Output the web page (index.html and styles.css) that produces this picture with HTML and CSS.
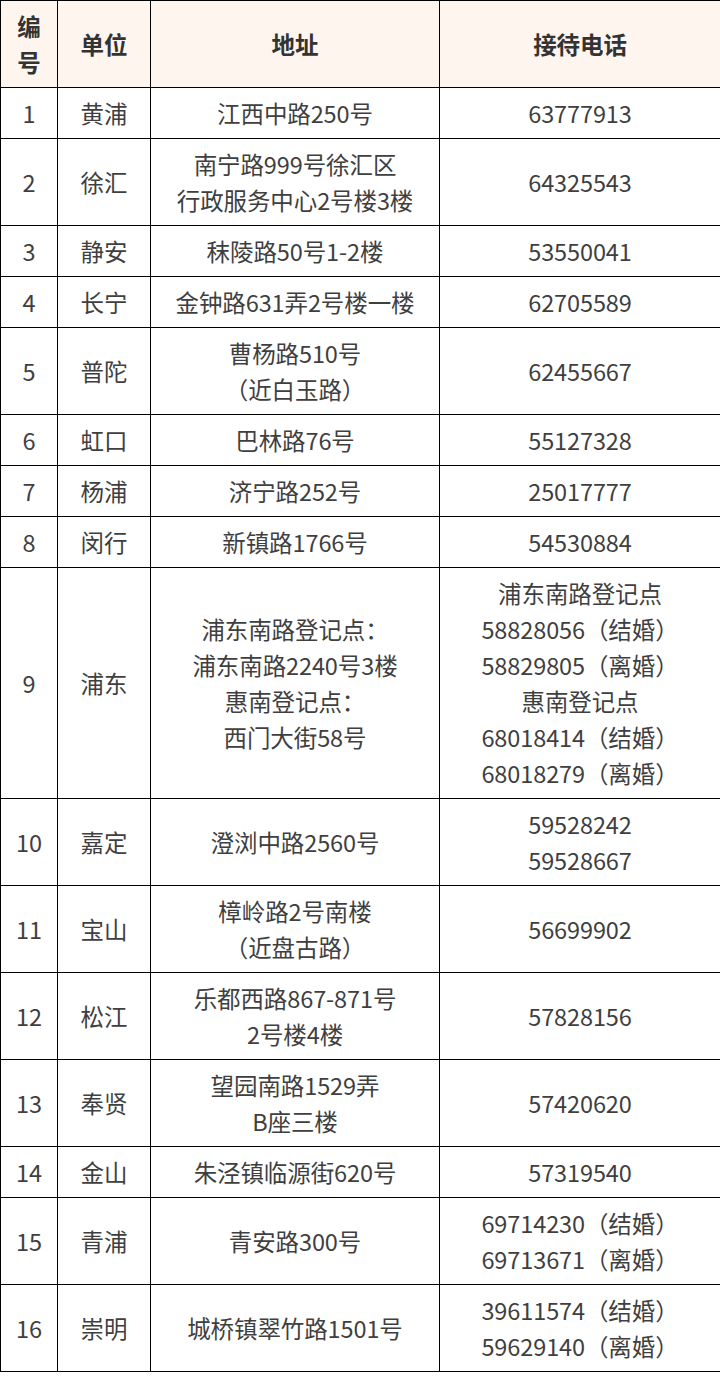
FILE: index.html
```html
<!DOCTYPE html>
<html lang="zh-CN">
<head>
<meta charset="utf-8">
<title>婚姻登记处</title>
<link rel="stylesheet" href="styles.css">
</head>
<body>
<table class="reg">
  <colgroup>
    <col class="c-no">
    <col class="c-unit">
    <col class="c-addr">
    <col class="c-tel">
  </colgroup>
  <thead>
    <tr><th>编<br>号</th><th>单位</th><th>地址</th><th>接待电话</th></tr>
  </thead>
  <tbody>
    <tr><td>1</td><td>黄浦</td><td>江西中路250号</td><td>63777913</td></tr>
    <tr><td>2</td><td>徐汇</td><td>南宁路999号徐汇区<br>行政服务中心2号楼3楼</td><td>64325543</td></tr>
    <tr><td>3</td><td>静安</td><td>秣陵路50号1-2楼</td><td>53550041</td></tr>
    <tr><td>4</td><td>长宁</td><td>金钟路631弄2号楼一楼</td><td>62705589</td></tr>
    <tr><td>5</td><td>普陀</td><td>曹杨路510号<br>（近白玉路）</td><td>62455667</td></tr>
    <tr><td>6</td><td>虹口</td><td>巴林路76号</td><td>55127328</td></tr>
    <tr><td>7</td><td>杨浦</td><td>济宁路252号</td><td>25017777</td></tr>
    <tr><td>8</td><td>闵行</td><td>新镇路1766号</td><td>54530884</td></tr>
    <tr><td>9</td><td>浦东</td><td>浦东南路登记点：<br>浦东南路2240号3楼<br>惠南登记点：<br>西门大街58号</td><td>浦东南路登记点<br>58828056（结婚）<br>58829805（离婚）<br>惠南登记点<br>68018414（结婚）<br>68018279（离婚）</td></tr>
    <tr><td>10</td><td>嘉定</td><td>澄浏中路2560号</td><td>59528242<br>59528667</td></tr>
    <tr><td>11</td><td>宝山</td><td>樟岭路2号南楼<br>（近盘古路）</td><td>56699902</td></tr>
    <tr><td>12</td><td>松江</td><td>乐都西路867-871号<br>2号楼4楼</td><td>57828156</td></tr>
    <tr><td>13</td><td>奉贤</td><td>望园南路1529弄<br>B座三楼</td><td>57420620</td></tr>
    <tr><td>14</td><td>金山</td><td>朱泾镇临源街620号</td><td>57319540</td></tr>
    <tr><td>15</td><td>青浦</td><td>青安路300号</td><td>69714230（结婚）<br>69713671（离婚）</td></tr>
    <tr><td>16</td><td>崇明</td><td>城桥镇翠竹路1501号</td><td>39611574（结婚）<br>59629140（离婚）</td></tr>
  </tbody>
</table>
</body>
</html>
```
FILE: styles.css
```css
html, body {
  margin: 0;
  padding: 0;
  background: #ffffff;
}

body {
  font-family: "Noto Sans CJK SC", "Noto Sans", sans-serif;
  color: #3f3f3f;
}

.reg {
  width: 720px;
  border-collapse: collapse;
  table-layout: fixed;
  font-size: 23.5px;
  line-height: 36px;
  letter-spacing: -0.1px;
}

.c-no { width: 57px; }
.c-unit { width: 93px; }
.c-addr { width: 289px; }
.c-tel { width: 281px; }

.reg th,
.reg td {
  border: 1px solid #000;
  padding: 7px 2px;
  text-align: center;
  vertical-align: middle;
  font-weight: 400;
}

.reg th {
  background: #fdf5ee;
  font-weight: 700;
  color: #333333;
}
```
